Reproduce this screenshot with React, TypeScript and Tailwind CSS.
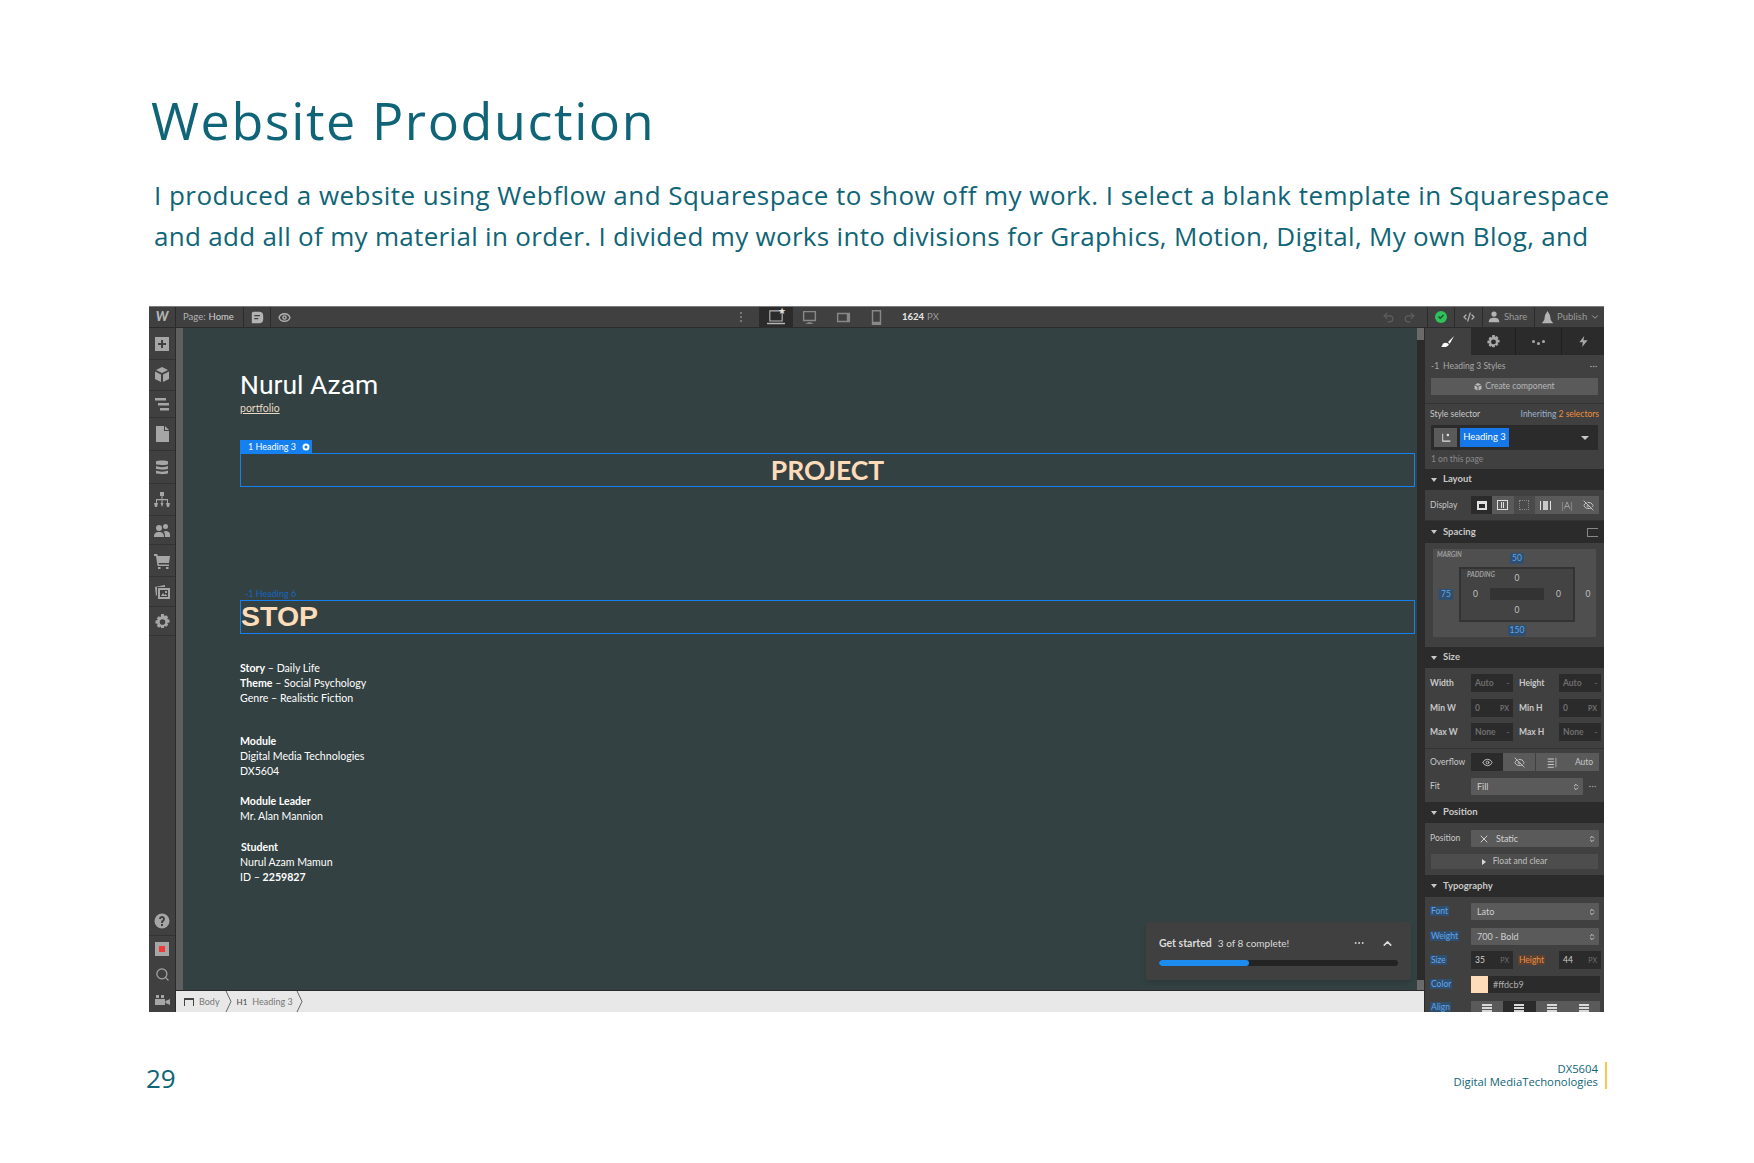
import React from 'react';
import { ChevronDown, ChevronUp, ChevronsUpDown, Code2, Eye, EyeOff, MoreHorizontal, Redo2, Search, Undo2, X } from 'lucide-react';

const ui = "font-['Lato','Liberation_Sans',sans-serif]";

const gearPath =
  'M6.500 0h3l.5 2.500 2-1.200 2.100 2.100-1.200 2 2.600.6v3l-2.600.5 1.200 2-2.100 2.100-2-1.200-.5 2.600h-3L6 13.400l-2 1.200-2.100-2.100 1.200-2L.500 10V7l2.600-.6-1.200-2L4 2.300l2 1.200zM8 5.500a3 3 0 100 6 3 3 0 000-6z';

function Svg({ children, size = 16, className = '' }: { children: React.ReactNode; size?: number; className?: string }) {
  return (
    <svg width={size} height={size} viewBox="0 0 16 16" fill="currentColor" className={className}>
      {children}
    </svg>
  );
}

const railIcons: { h: number; icon: React.ReactNode }[] = [
  { h: 32, icon: <Svg><path fillRule="evenodd" d="M1 1h14v14H1zM7 4v3H4v2h3v3h2V9h3V7H9V4z" /></Svg> },
  { h: 31, icon: <Svg><path d="M8 0l6 3-6 3-6-3zM1 4.5l6 3V15l-6-3zM15 4.5l-6 3V15l6-3z" /></Svg> },
  { h: 27, icon: <Svg><path d="M1 2h11v2.5H1zM4 7h11v2.5H4zM6 12h9v2.500H6z" /></Svg> },
  { h: 33, icon: <Svg><path d="M2 0h8v5h5v11H2zM11 0l4 4h-4z" /></Svg> },
  { h: 33, icon: <Svg><path d="M2 2.500C2 1 14 1 14 2.500V5c0 1.500-12 1.500-12 0zM2 7c3 1.500 9 1.500 12 0v2.500c0 1.500-12 1.500-12 0zM2 11.500c3 1.500 9 1.500 12 0V14c0 1.500-12 1.500-12 0z" /></Svg> },
  { h: 32, icon: <Svg><path d="M6 0h4v4H8.500v3H14v4h2l-1 4h-2l-1-4h1V8.200H8.500V11h1l-1.500 4L6.500 11h1V8.200H3V11h1l-1 4H1l-1-4h2V7h5.500V4H6z" /></Svg> },
  { h: 29, icon: <Svg><path d="M5 3a3 3 0 110 6 3 3 0 010-6zM11.500 2a2.500 2.500 0 110 5 2.500 2.500 0 010-5zM0 15c0-4 2-5 5-5s5 1 5 5zM11 15c0-2 0-4-1.500-5.500 3-1.500 6.500 0 6.500 3V15z" /></Svg> },
  { h: 32, icon: <Svg><path d="M0 1h3l1 2h12l-1 7H4.500L5 11.500h10V13H3.500L2 3H0zM4 14h2.500v2H4zM12 14h2.500v2H12z" /></Svg> },
  { h: 30, icon: <Svg><path fillRule="evenodd" d="M4 4h12v11H4zM6 6v7h8V6zM1 3l10-2v2H3v8l-1 1zM7 12l2-3 1.500 2 1-1 2 2zM11 7h2v2h-2z" /></Svg> },
  { h: 29, icon: <Svg size={15}><path fillRule="evenodd" d={gearPath} /></Svg> },
];

function Rail() {
  return (
    <div className="w-[27px] shrink-0 bg-[#404040] border-r border-[#2b2b2b] flex flex-col text-[#a6a6a6]">
      {railIcons.map((r, i) => (
        <div key={i} style={{ height: r.h }} className="flex items-center justify-center border-b border-[#333333] last:border-b-0">
          {r.icon}
        </div>
      ))}
      <div className="flex-1" />
      <div className="h-[30px] flex items-center justify-center border-b border-[#333333]">
        <Svg><circle cx="8" cy="8" r="7.500" /><path fill="#404040" d="M5 6c0-4 6-4 6 0 0 2-2 2-2 4H7c0-3 2-3 2-4 0-1.500-2-1-2 0zM7 11h2v2H7z" /></Svg>
      </div>
      <div className="h-[25px] flex items-center justify-center">
        <div className="w-[14px] h-[14px] bg-[#a6a6a6] flex items-center justify-center">
          <div className="w-[6px] h-[6px] bg-[#f03a3a]" />
        </div>
      </div>
      <div className="h-[26px] flex items-center justify-center"><Search size={15} /></div>
      <div className="h-[25px] flex items-center justify-center">
        <Svg><path d="M1 7h10v6H1zM11.500 9L16 7v6l-4.500-2zM2 3h3v3H2zM7 3h3v3H7z" /></Svg>
      </div>
    </div>
  );
}

function TopBar() {
  return (
    <div className={`h-[22px] shrink-0 flex items-stretch bg-[#404040] border-t border-[#7a7a7a] border-b border-b-[#2b2b2b] text-[#b3b3b3] text-[9.500px] [&>*]:shrink-0 ${ui}`}>
      <div className="w-[27px] flex items-center justify-center border-r border-[#2b2b2b] text-[#b5b5b5] font-black text-[13px] italic">W</div>
      <div className="w-[68px] flex items-center pl-[7px] border-r border-[#2b2b2b] whitespace-nowrap">Page: <span className="text-[#d0d0d0] ml-[3px]">Home</span></div>
      <div className="w-[27px] flex items-center justify-center border-r border-[#2b2b2b]">
        <Svg size={13}><path d="M3 1h7a5 5 0 015 5v4a5 5 0 01-5 5H1V3a2 2 0 012-2z" /><path fill="#404040" d="M4 5h7v1.500H4zM4 8.500h5V10H4z" /></Svg>
      </div>
      <div className="w-[27px] flex items-center justify-center"><Eye size={13} strokeWidth={2.500} /></div>
      <div className="w-[445px] flex items-center justify-end pr-[1px]">
        <div className="flex flex-col gap-[2px]">
          <span className="block w-[2px] h-[2px] bg-[#777777]" />
          <span className="block w-[2px] h-[2px] bg-[#777777]" />
          <span className="block w-[2px] h-[2px] bg-[#777777]" />
        </div>
      </div>
      <div className="ml-[16px] w-[34px] bg-[#2b2b2b] flex items-center justify-center text-[#b5b5b5] relative">
        <Svg size={18}><path fillRule="evenodd" d="M2 2h12v10H2zM3 3v8h10V3zM0 13h16v1.500H0z" /></Svg>
        <span className="absolute top-[-3px] right-[7px] text-[9px] text-[#e0e0e0]">★</span>
      </div>
      <div className="w-[33px] flex items-center justify-center text-[#888888]">
        <Svg size={15}><path fillRule="evenodd" d="M1 1h14v11H1zM2.500 2.500v8h11v-8zM6 13h4v1h2v1H4v-1h2z" /></Svg>
      </div>
      <div className="w-[34px] flex items-center justify-center text-[#888888]">
        <Svg size={15}><path fillRule="evenodd" d="M1 3h14v10H1zM2.500 4.500v7h9v-7z" /></Svg>
      </div>
      <div className="w-[33px] flex items-center justify-center text-[#888888]">
        <Svg size={15}><path fillRule="evenodd" d="M3 0h10v16H3zM4.500 1.500v11h7v-11z" /></Svg>
      </div>
      <div className="ml-[9px] w-[480px] flex items-center font-bold whitespace-nowrap"><span className="text-[#e8e8e8]">1624</span><span className="ml-[3px] text-[#9a9a9a] font-normal">PX</span></div>
      <div className="w-[45px] flex items-center gap-[8px] text-[#5f5f5f]"><Undo2 size={13} /><Redo2 size={13} /></div>
      <div className="w-[28px] flex items-center justify-center border-x border-[#2b2b2b]">
        <div className="w-[12px] h-[12px] rounded-full bg-[#2fc25b] flex items-center justify-center">
          <Svg size={8} className="text-[#1f4d2e]"><path d="M2 8l2-2 2.500 2.500L12 3l2 2-7.500 7.500z" /></Svg>
        </div>
      </div>
      <div className="w-[28px] flex items-center justify-center border-r border-[#2b2b2b]"><Code2 size={12} strokeWidth={2.500} /></div>
      <div className="w-[52px] flex items-center pl-[5px] gap-[4px] border-r border-[#2b2b2b]">
        <Svg size={12}><circle cx="8" cy="4" r="3.500" /><path d="M1 15c0-5 3-6 7-6s7 1 7 6z" /></Svg>
        <span className="text-[#9a9a9a]">Share</span>
      </div>
      <div className="flex-1 flex items-center pl-[6px] gap-[3px]">
        <Svg size={13}><path d="M8 0l3 5 1 6 3 4H1l3-4 1-6z" /></Svg>
        <span className="text-[#9a9a9a]">Publish</span>
        <ChevronDown size={10} />
      </div>
    </div>
  );
}

function PageCanvas() {
  const lineCls = 'h-[15.200px]';
  return (
    <div className={`flex-1 min-w-0 bg-[#334142] relative pl-[57px] pr-[2px] text-white text-[10.600px] leading-[15.200px] ${ui}`}>
      <div className="mt-[42px] text-[26.500px] leading-[30px] whitespace-nowrap font-['Roboto',sans-serif]">Nurul Azam</div>
      <div className="mt-[2px] text-[10.500px] leading-[13px] underline text-[#e8d8c4] w-fit">portfolio</div>
      <div className="mt-[25px] h-[13px] w-[72px] bg-[#1580f0] text-[9px] leading-[13px] pl-[8px] flex items-center gap-[6px] whitespace-nowrap">
        1 Heading 3
        <Svg size={8}><circle cx="8" cy="8" r="5" fill="none" stroke="currentColor" strokeWidth="4" /></Svg>
      </div>
      <div className="h-[34px] border border-[#1580f0] flex items-center justify-center text-[#ffdcb9] font-bold text-[26.500px] pt-[1px]">PROJECT</div>
      <div className="mt-[100px] h-[13px] pl-[5px] text-[9px] leading-[13px] text-[#1566c0]">-1 Heading 6</div>
      <div className="h-[34px] border border-[#1580f0] flex items-center text-[#ffdcb9] font-bold text-[28.500px] font-['Liberation_Sans',sans-serif]">STOP</div>

      <div className="mt-[27px]">
        <div className={lineCls}><b>Story</b> – Daily Life</div>
        <div className={lineCls}><b>Theme</b> – Social Psychology</div>
        <div className={lineCls}>Genre – Realistic Fiction</div>
      </div>
      <div className="mt-[27px]">
        <div className={`${lineCls} font-bold`}>Module</div>
        <div className={lineCls}>Digital Media Technologies</div>
        <div className={lineCls}>DX5604</div>
      </div>
      <div className="mt-[15px]">
        <div className={`${lineCls} font-bold`}>Module Leader</div>
        <div className={lineCls}>Mr. Alan Mannion</div>
      </div>
      <div className="mt-[15px]">
        <div className={`${lineCls} font-bold pl-[1px]`}>Student</div>
        <div className={lineCls}>Nurul Azam Mamun</div>
        <div className={lineCls}>ID – <b>2259827</b></div>
      </div>

      <div className="absolute left-[963px] bottom-[10px] w-[265px] h-[58px] rounded-[3px] bg-[#404040] px-[13px] pt-[14px] shadow-md">
        <div className="flex items-center text-[#d9d9d9] text-[10px] leading-[14px]">
          <b className="mr-[6px] text-[10.500px]">Get started</b>
          <span>3 of 8 complete!</span>
          <MoreHorizontal size={12} className="ml-auto mr-[16px]" />
          <ChevronUp size={13} strokeWidth={3} className="mr-[4px]" />
        </div>
        <div className="mt-[10px] h-[6px] w-[239px] rounded-full bg-[#232323] overflow-hidden">
          <div className="h-full rounded-full bg-[#1c8cf0]" style={{ width: `${(3 / 8) * 100}%` }} />
        </div>
      </div>
    </div>
  );
}

function Chevron({ className = '' }: { className?: string }) {
  return (
    <svg width="7" height="21" viewBox="0 0 7 21" fill="none" stroke="#666666" className={className}>
      <path d="M1 0l5 10.500-5 10.500" />
    </svg>
  );
}

function Breadcrumb() {
  return (
    <div className={`h-[22px] shrink-0 bg-[#e8e8e8] border-t border-[#2b2b2b] flex items-center text-[#777777] text-[9px] ${ui}`}>
      <div className="ml-[8px] w-[10px] h-[8px] border-t-2 border-x border-[#444444]" />
      <span className="ml-[5px]">Body</span>
      <Chevron className="ml-[5px]" />
      <span className="ml-[5px] text-[#444444] text-[8px]">H1</span>
      <span className="ml-[5px]">Heading 3</span>
      <Chevron className="ml-[3px]" />
    </div>
  );
}

function SectionHead({ label, h = 22, right }: { label: string; h?: number; right?: React.ReactNode }) {
  return (
    <div style={{ height: h }} className="bg-[#2b2b2b] flex items-center pl-[6px] pr-[6px] text-[#c8c8c8] font-bold text-[9.500px] shrink-0">
      <span className="w-0 h-0 border-x-[3px] border-x-transparent border-t-[4px] border-t-[#c8c8c8] mr-[6px]" />
      {label}
      {right && <span className="ml-auto">{right}</span>}
    </div>
  );
}

function NumInput({ text, unit, w = 42, color = '' }: { text: string; unit?: string; w?: number; color?: string }) {
  return (
    <div style={{ width: w }} className="h-[18px] bg-[#2b2b2b] flex items-center justify-between px-[4px] text-[#6f6f6f] text-[8.500px]">
      <span className={color}>{text}</span>
      <span className="text-[7px]">{unit ?? '-'}</span>
    </div>
  );
}

function SelectBox({ text, w, icon }: { text: string; w: number; icon?: React.ReactNode }) {
  return (
    <div style={{ width: w }} className="h-[17px] bg-[#5a5a5a] rounded-[1px] flex items-center pl-[6px] pr-[3px] text-[#d0d0d0] text-[9px]">
      {icon}
      {text}
      <ChevronsUpDown size={8} strokeWidth={3} className="ml-auto" />
    </div>
  );
}

function SizeRow({ a, av, au, ac, b, bv, bu, bc, mt }: { a: string; av: string; au?: string; ac?: string; b: string; bv: string; bu?: string; bc?: string; mt: string }) {
  return (
    <div className={`flex items-center pl-[5px] text-[#c8c8c8] text-[8.500px] font-bold ${mt}`}>
      <span className="w-[41px]">{a}</span>
      <NumInput text={av} unit={au} color={ac} />
      <span className="w-[46px] pl-[6px]">{b}</span>
      <NumInput text={bv} unit={bu} color={bc} />
    </div>
  );
}

function BlueLabel({ children }: { children: React.ReactNode }) {
  return <span className="bg-[#2f4f70] text-[#62a6ea] px-[1px] text-[8.500px] leading-[11px]">{children}</span>;
}

function SpacingBox() {
  const valueCls = 'flex items-center justify-center text-[#c0c0c0] text-[8.500px]';
  const blue = 'bg-[#2f4f70] text-[#62a6ea] px-[2px] text-[8.500px] leading-[11px]';
  return (
    <div className="relative mx-[7px] mt-[5px] h-[90px] bg-[#4f4f4f] border border-[#404040] grid grid-cols-[26px_116px_26px] grid-rows-[18px_55px_17px]">
      <span className="absolute left-[4px] top-[1px] text-[6.500px] font-bold italic text-[#a0a0a0]">MARGIN</span>
      <div className={`${valueCls} col-span-3`}><span className={blue}>50</span></div>
      <div className={valueCls}><span className={blue}>75</span></div>
      <div className="relative bg-[#434343] border-2 border-[#333333] grid grid-cols-[29px_54px_29px] grid-rows-[19px_12px_20px]">
        <span className="absolute left-[6px] top-[1px] text-[6.500px] font-bold italic text-[#a0a0a0]">PADDING</span>
        <div className={`${valueCls} col-span-3`}>0</div>
        <div className={valueCls}>0</div>
        <div className="bg-[#333333] rounded-[1px]" />
        <div className={valueCls}>0</div>
        <div className={`${valueCls} col-span-3`}>0</div>
      </div>
      <div className={valueCls}>0</div>
      <div className={`${valueCls} col-span-3`}><span className={blue}>150</span></div>
    </div>
  );
}

function StylePanel() {
  return (
    <div className={`w-[180px] shrink-0 bg-[#404040] border-l border-[#2b2b2b] flex flex-col overflow-hidden text-[#c8c8c8] text-[9px] ${ui}`}>
      {/* tabs */}
      <div className="h-[27px] shrink-0 flex bg-[#2b2b2b] text-[#a8a8a8]">
        <div className="w-[46px] bg-[#404040] flex items-center justify-center text-white">
          <Svg size={14}><path d="M15 1L8 8l2 2zM2 10c3-2 6-1 7 1-2 3-6 3-9 2 1-.5 2-1 2-3z" /></Svg>
        </div>
        <div className="w-[45px] border-r border-[#1f1f1f] flex items-center justify-center">
          <Svg size={13}><path fillRule="evenodd" d={gearPath} /></Svg>
        </div>
        <div className="w-[46px] border-r border-[#1f1f1f] flex items-center justify-center gap-[2px]">
          <span className="w-[3px] h-[3px] rounded-full bg-[#a8a8a8]" />
          <span className="w-[3px] h-[3px] rounded-full bg-[#a8a8a8] mt-[4px]" />
          <span className="w-[3px] h-[3px] rounded-full bg-[#a8a8a8]" />
        </div>
        <div className="flex-1 flex items-center justify-center">
          <Svg size={11}><path d="M9 0L2 9h5l-1 7 8-10H8z" /></Svg>
        </div>
      </div>
      {/* style header */}
      <div className="h-[23px] shrink-0 flex items-center pl-[6px] pr-[6px] text-[#a8a8a8] text-[8.500px] whitespace-nowrap">
        -1 <span className="ml-[4px]">Heading 3 Styles</span>
        <MoreHorizontal size={9} className="ml-auto" />
      </div>
      <div className="mx-[6px] h-[17px] shrink-0 bg-[#5a5a5a] flex items-center justify-center gap-[3px] text-[#b8b8b8] text-[8.500px]">
        <Svg size={8}><path d="M8 0l6 3-6 3-6-3zM1 4.500l6 3V15l-6-3zM15 4.500l-6 3V15l6-3z" /></Svg>
        Create component
      </div>
      <div className="mt-[8px] shrink-0 border-t border-[#333333] h-[22px] flex items-center justify-between px-[5px] text-[8.500px] whitespace-nowrap">
        <span>Style selector</span>
        <span className="text-[#9db4d0]">Inheriting <span className="text-[#ef8f3c]">2 selectors</span></span>
      </div>
      <div className="mx-[6px] h-[25px] shrink-0 bg-[#2b2b2b] rounded-[1px] flex items-center px-[3px]">
        <div className="w-[23px] h-[19px] bg-[#5a5a5a] flex items-center justify-center">
          <Svg size={10} className="text-[#e0e0e0]"><path d="M2 1h1.500v11H15v2H2zM11 1a2 2 0 110 4 2 2 0 010-4z" /></Svg>
        </div>
        <div className="ml-[3px] w-[49px] h-[19px] bg-[#1577e8] text-white flex items-center justify-center text-[9.500px] whitespace-nowrap">Heading 3</div>
        <span className="ml-auto mr-[6px] w-0 h-0 border-x-[4px] border-x-transparent border-t-[4px] border-t-[#c8c8c8]" />
      </div>
      <div className="h-[19px] shrink-0 flex items-center pl-[6px] text-[8.500px] text-[#8a8a8a]">1 on this page</div>

      <SectionHead label="Layout" h={21} />
      <div className="h-[31px] shrink-0 border-b border-[#333333] flex items-center pl-[5px] text-[8.500px]">
        <span className="w-[41px]">Display</span>
        <div className="flex w-[128px] h-[18px] bg-[#5a5a5a] text-[#c8c8c8]">
          {[
            <span className="block w-[10px] h-[9px] border-2 border-t-[3px] border-[#e0e0e0]" />,
            <span className="block w-[11px] h-[10px] border border-[#e0e0e0] relative"><span className="absolute left-[3px] top-[1px] w-[3px] h-[6px] border-x border-[#e0e0e0]" /></span>,
            <span className="block w-[10px] h-[10px] border border-dotted border-[#8a8a8a]" />,
            <span className="block w-[11px] h-[9px] border-x border-[#e0e0e0] px-[2px]"><span className="block h-full bg-[#c8c8c8]" /></span>,
            <span className="text-[10px] leading-none font-light">|A|</span>,
            <EyeOff size={11} />,
          ].map((ic, i) => (
            <div key={i} className={`flex-1 flex items-center justify-center ${i === 0 ? 'bg-[#2b2b2b]' : ''} ${i === 2 ? 'bg-[#4a4a4a]' : ''}`}>{ic}</div>
          ))}
        </div>
      </div>

      <SectionHead label="Spacing" h={22} right={<span className="block w-[11px] h-[9px] border border-[#888888] border-r-0" />} />
      <SpacingBox />

      <div className="mt-[9px] shrink-0"><SectionHead label="Size" h={21} /></div>
      <SizeRow mt="mt-[6px]" a="Width" av="Auto" b="Height" bv="Auto" />
      <SizeRow mt="mt-[7px]" a="Min W" av="0" au="PX" b="Min H" bv="0" bu="PX" />
      <SizeRow mt="mt-[6px]" a="Max W" av="None" b="Max H" bv="None" />

      <div className="mt-[7px] shrink-0 border-t border-[#333333] pt-[4px] flex items-center pl-[5px] text-[8.500px]">
        <span className="w-[41px]">Overflow</span>
        <div className="flex w-[128px] h-[18px] bg-[#5a5a5a]">
          <div className="w-[32px] bg-[#2b2b2b] flex items-center justify-center"><Eye size={11} /></div>
          <div className="w-[33px] flex items-center justify-center border-r border-[#404040]"><EyeOff size={11} /></div>
          <div className="w-[33px] flex items-center justify-center"><Svg size={11}><path d="M1 2h9v1.500H1zM1 6h9v1.500H1zM1 10h9v1.500H1zM1 14h9v1.500H1zM12.500 1h1v14h-1z" /></Svg></div>
          <div className="flex-1 flex items-center justify-center">Auto</div>
        </div>
      </div>
      <div className="mt-[7px] shrink-0 flex items-center pl-[5px] text-[8.500px]">
        <span className="w-[41px]">Fit</span>
        <SelectBox text="Fill" w={112} />
        <MoreHorizontal size={9} className="ml-[5px] text-[#a0a0a0]" />
      </div>

      <div className="mt-[7px] shrink-0"><SectionHead label="Position" h={21} /></div>
      <div className="mt-[7px] shrink-0 flex items-center pl-[5px] text-[8.500px]">
        <span className="w-[41px]">Position</span>
        <SelectBox text="Static" w={128} icon={<X size={12} className="mr-[6px] ml-[1px]" />} />
      </div>
      <div className="mt-[7px] mx-[6px] h-[15px] shrink-0 bg-[#4d4d4d] flex items-center justify-center text-[8.500px] text-[#c0c0c0]">
        <span className="w-0 h-0 border-y-[3px] border-y-transparent border-l-[4px] border-l-[#d8d8d8] mr-[7px]" />
        Float and clear
      </div>

      <div className="mt-[6px] shrink-0"><SectionHead label="Typography" h={22} /></div>
      <div className="mt-[6px] shrink-0 flex items-center pl-[5px] text-[8.500px]">
        <span className="w-[41px]"><BlueLabel>Font</BlueLabel></span>
        <SelectBox text="Lato" w={128} />
      </div>
      <div className="mt-[8px] shrink-0 flex items-center pl-[5px] text-[8.500px]">
        <span className="w-[41px]"><BlueLabel>Weight</BlueLabel></span>
        <SelectBox text="700 - Bold" w={128} />
      </div>
      <div className="mt-[6px] shrink-0 flex items-center pl-[5px] text-[8.500px]">
        <span className="w-[41px]"><BlueLabel>Size</BlueLabel></span>
        <NumInput text="35" unit="PX" color="text-[#d0d0d0]" />
        <span className="ml-[5px] w-[41px]"><span className="bg-[#5a4030] text-[#ea8f46] px-[1px]">Height</span></span>
        <NumInput text="44" unit="PX" color="text-[#d0d0d0]" />
      </div>
      <div className="mt-[7px] shrink-0 flex items-center pl-[5px] text-[8.500px]">
        <span className="w-[41px]"><BlueLabel>Color</BlueLabel></span>
        <div className="w-[129px] h-[17px] bg-[#2b2b2b] flex items-center text-[#b0b0b0] text-[9px]">
          <span className="w-[17px] h-full bg-[#ffdcb9] mr-[5px]" />
          #ffdcb9
        </div>
      </div>
      <div className="mt-[8px] shrink-0 flex items-start pl-[5px] text-[8.500px]">
        <span className="w-[41px]"><BlueLabel>Align</BlueLabel></span>
        <div className="w-[129px] h-[18px] bg-[#5a5a5a] flex">
          {[0, 1, 2, 3].map((i) => (
            <div key={i} className={`flex-1 flex flex-col items-center pt-[3px] gap-[1px] ${i === 1 ? 'bg-[#2b2b2b]' : ''}`}>
              <span className="block w-[10px] h-[2px] bg-[#d8d8d8]" />
              <span className="block w-[10px] h-[2px] bg-[#d8d8d8]" />
              <span className="block w-[10px] h-[2px] bg-[#d8d8d8]" />
            </div>
          ))}
        </div>
      </div>
    </div>
  );
}

function WebflowShot() {
  return (
    <div className="ml-[149px] w-[1455px] h-[706px] flex flex-col overflow-hidden">
      <TopBar />
      <div className="flex-1 min-h-0 flex">
        <Rail />
        <div className="flex-1 min-w-0 flex flex-col">
          <div className="flex-1 min-h-0 flex">
            <div className="w-[7px] shrink-0 bg-[#5f5f5f]" />
            <PageCanvas />
            <div className="w-[7px] shrink-0 bg-[#2b2b2b] flex flex-col justify-between">
              <div className="h-[12px] bg-[#6a6a6a]" />
              <div className="h-[10px] bg-[#6a6a6a]" />
            </div>
          </div>
          <Breadcrumb />
        </div>
        <StylePanel />
      </div>
    </div>
  );
}

export default function App() {
  return (
    <div className="w-[1754px] h-[1163px] bg-white overflow-hidden font-['Open_Sans',sans-serif] text-[#0f6577] pt-[85px]">
      <h1 className="ml-[151px] text-[52px] font-medium leading-[70px] tracking-[1.600px] whitespace-nowrap">Website Production</h1>
      <div className="ml-[154px] mt-[20px] text-[26px] leading-[41px] whitespace-nowrap">
        <p className="tracking-[0.460px]">I produced a website using Webflow and Squarespace to show off my work. I select a blank template in Squarespace</p>
        <p className="tracking-[0.310px]">and add all of my material in order. I divided my works into divisions for Graphics, Motion, Digital, My own Blog, and</p>
      </div>
      <div className="mt-[49px]">
        <WebflowShot />
      </div>
      <div className="mt-[48px] ml-[146px] w-[1461px] flex items-center justify-between">
        <span className="text-[26px] leading-[36px]">29</span>
        <div className="flex items-center h-[27px] mb-[6px]">
          <div className="text-right text-[11.300px] leading-[13px] mr-[7px]">
            <div>DX5604</div>
            <div>Digital MediaTechonologies</div>
          </div>
          <div className="w-[2px] h-full bg-[#fbc94a]" />
        </div>
      </div>
    </div>
  );
}
